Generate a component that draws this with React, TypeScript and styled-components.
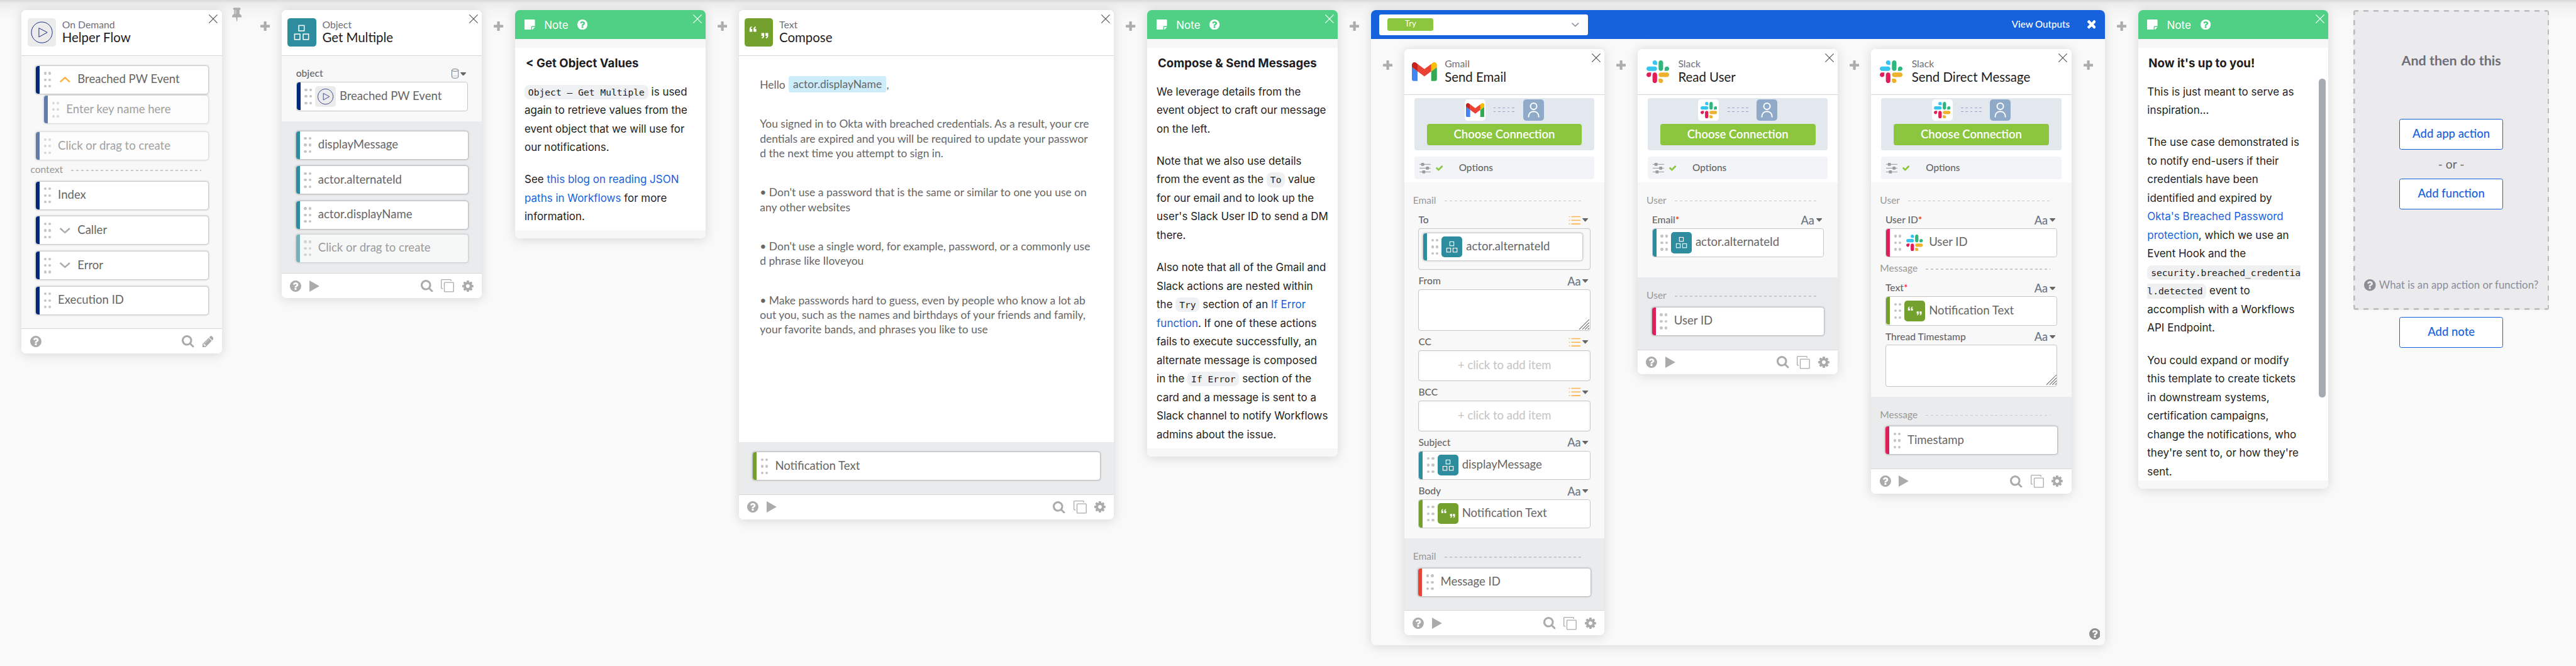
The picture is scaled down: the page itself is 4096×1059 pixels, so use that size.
import React, { ReactNode } from "react";
import styled, { createGlobalStyle, css } from "styled-components";

/* One rem is a 617.8th part of the window width, so the board scales with it. */
const GlobalStyle = createGlobalStyle`
  html { font-size: calc(100vw / 617.8); }
  body { margin: 0; background: #f9f9f9; overflow: hidden; }
  *, *::before, *::after { box-sizing: border-box; }
`;

const color = {
  text: "#666666",
  dark: "#1d1d21",
  muted: "#999999",
  icon: "#ababab",
  line: "#d5d6db",
  blue: "#1662dd",
  navy: "#00297a",
  teal: "#2d8c9e",
  green: "#74a12e",
  lime: "#8cc63f",
  note: "#4fd084",
  pink: "#e01e5a",
  red: "#ea4335",
};

const ui = `Lato, "Open Sans", sans-serif`;
const prose = `Inter, Roboto, sans-serif`;
const mono = `"DejaVu Sans Mono", "Liberation Mono", monospace`;

/* ---------- board ---------- */

const Board = styled.main`
  height: 100vh;
  padding: 2.4rem 0 0 5.2rem;
  display: flex;
  align-items: flex-start;
  overflow: hidden;
  font-family: ${ui};
  color: ${color.text};
  background: linear-gradient(
      rgba(0, 0, 0, 0.13) 0,
      rgba(0, 0, 0, 0.055) 0.8rem,
      rgba(0, 0, 0, 0.025) 2.2rem,
      transparent 5rem
    ),
    #f9f9f9;
`;

const PinSlot = styled.div`
  width: 6.4rem;
  padding-left: 2.5rem;
  margin-top: -0.6rem;
`;

const AddSlot = styled.div`
  flex: none;
  width: 8rem;
  padding-top: 2.7rem;
  display: flex;
  justify-content: center;
`;

const cardShadow = css`
  box-shadow: 0 0.2rem 2.6rem rgba(0, 0, 0, 0.14);
`;

const Card = styled.section<{ $w?: number }>`
  flex: none;
  position: relative;
  width: ${(p) => (p.$w ?? 480) / 10}rem;
  border-radius: 1.1rem;
  background: #fff;
  overflow: hidden;
`;

const CardShell = styled.div`
  flex: none;
  border-radius: 1.1rem;
  ${cardShadow}
`;

const CardHeader = styled.header`
  height: 11rem;
  padding: 2rem 0 0 1.4rem;
  display: flex;
  gap: 1.5rem;
  border-bottom: 0.2rem solid ${color.line};
  background: #fff;
`;

const AppName = styled.div`
  font-size: 2.38rem;
  line-height: 2.9rem;
  color: #6e6e78;
`;

const ActionName = styled.div`
  font-size: 3.08rem;
  line-height: 3.6rem;
  color: ${color.dark};
`;

const CloseButton = styled.span`
  position: absolute;
  top: 1rem;
  right: 0.95rem;
  display: flex;
`;

const Inputs = styled.div<{ $bottom?: number }>`
  padding-bottom: ${(p) => (p.$bottom ?? 16) / 10}rem;
  background: #f8f8f8;
`;

const Outputs = styled.div<{ $top?: number; $bottom?: number }>`
  padding-top: ${(p) => (p.$top ?? 0) / 10}rem;
  padding-bottom: ${(p) => (p.$bottom ?? 34) / 10}rem;
  background: #eaebed;
`;

const CardFooter = styled.footer`
  height: 6rem;
  padding: 0 2rem;
  display: flex;
  align-items: center;
  gap: 1.95rem;
  border-top: 0.2rem solid ${color.line};
  background: #fff;
`;

const Spacer = styled.span`
  flex: 1;
`;

/* ---------- svg sizing ---------- */

const Glyph = styled.svg<{ $w: number; $h?: number }>`
  flex: none;
  display: block;
  width: ${(p) => p.$w / 10}rem;
  height: ${(p) => (p.$h ?? p.$w) / 10}rem;
  fill: currentColor;
`;

const Stroke = styled(Glyph)<{ $sw?: number }>`
  fill: none;
  stroke: currentColor;
  stroke-width: ${(p) => p.$sw ?? 2};
  overflow: visible;
`;

const Tint = styled.span<{ $c: string }>`
  display: flex;
  color: ${(p) => p.$c};
`;

const HelpIcon = ({ size = 27 }: { size?: number }) => (
  <Glyph $w={size} viewBox="128 128 1536 1536">
    <path d="M1024 1376v-192q0-14-9-23t-23-9h-192q-14 0-23 9t-9 23v192q0 14 9 23t23 9h192q14 0 23-9t9-23zm256-672q0-88-55.5-163t-138.5-116-170-41q-243 0-371 213-15 24 8 42l132 100q7 6 19 6 16 0 25-12 53-68 86-92 34-24 86-24 48 0 85.5 26t37.5 59q0 38-20 61t-68 45q-63 28-115.5 86.5t-52.5 125.5v36q0 14 9 23t23 9h192q14 0 23-9t9-23q0-19 21.5-49.5t54.5-49.5q32-18 49-28.5t46-35 44.5-48 28-60.5 12.5-81zm384 192q0 209-103 385.5t-279.5 279.5-385.5 103-385.5-103-279.5-279.5-103-385.5 103-385.5 279.5-279.5 385.5-103 385.5 103 279.5 279.5 103 385.5z" />
  </Glyph>
);

const SearchIcon = () => (
  <Glyph $w={29.5} viewBox="64 128 1664 1664">
    <path d="M1216 832q0-185-131.5-316.5t-316.5-131.5-316.5 131.5-131.5 316.5 131.5 316.5 316.5 131.5 316.5-131.5 131.5-316.5zm512 832q0 52-38 90t-90 38q-54 0-90-38l-343-342q-179 124-399 124-143 0-273.5-55.5t-225-150-150-225-55.5-273.5 55.5-273.5 150-225 225-150 273.5-55.5 273.5 55.5 225 150 150 225 55.5 273.5q0 220-124 399l343 343q37 37 37 90z" />
  </Glyph>
);

const CogIcon = () => (
  <Glyph $w={27} viewBox="128 128 1536 1536">
    <path d="M1152 896q0-106-75-181t-181-75-181 75-75 181 75 181 181 75 181-75 75-181zm512-109v222q0 12-8 23t-20 13l-185 28q-19 54-39 91 35 50 107 138 10 12 10 25t-9 23q-27 37-99 108t-94 71q-12 0-26-9l-138-108q-44 23-91 38-16 136-29 186-7 28-36 28h-222q-14 0-24.5-8.5t-11.5-21.5l-28-184q-49-16-90-37l-141 107q-10 9-25 9-14 0-25-11-126-114-165-168-7-10-7-23 0-12 8-23 15-21 51-66.5t54-70.5q-27-50-41-99l-183-27q-13-2-21-12.5t-8-23.5v-222q0-12 8-23t19-13l186-28q14-46 39-92-40-57-107-138-10-12-10-24 0-10 9-23 26-36 98.5-107.5t94.5-71.5q13 0 26 10l138 107q44-23 91-38 16-136 29-186 7-28 36-28h222q14 0 24.5 8.5t11.5 21.5l28 184q49 16 90 37l142-107q9-9 24-9 13 0 25 10 129 119 165 170 7 8 7 22 0 12-8 23-15 21-51 66.5t-54 70.5q26 50 41 98l183 28q13 2 21 12.5t8 23.5z" />
  </Glyph>
);

const PencilIcon = () => (
  <Glyph $w={27} viewBox="128 149 1515 1515">
    <path d="M491 1536l91-91-235-235-91 91v107h128v128h107zm523-928q0-22-22-22-10 0-17 7l-542 542q-7 7-7 17 0 22 22 22 10 0 17-7l542-542q7-7 7-17zm-54-192l416 416-832 832h-416v-416zm683 96q0 53-37 90l-166 166-416-416 166-165q36-38 90-38 53 0 91 38l235 234q37 39 37 91z" />
  </Glyph>
);

const PinIcon = () => (
  <Glyph $w={23} $h={34} viewBox="320 128 1152 1664">
    <path d="M800 864v-448q0-14-9-23t-23-9-23 9-9 23v448q0 14 9 23t23 9 23-9 9-23zm672 352q0 26-19 45t-45 19h-429l-51 483q-2 12-10.5 20.5t-20.5 8.5h-1q-27 0-32-27l-76-485h-404q-26 0-45-19t-19-45q0-123 78.5-221.5t177.5-98.5v-512q-52 0-90-38t-38-90 38-90 90-38h640q52 0 90 38t38 90-38 90-90 38v512q99 0 177.5 98.5t78.5 221.5z" />
  </Glyph>
);

const TimesIcon = () => (
  <Glyph $w={20.5} viewBox="302 366 1188 1188">
    <path d="M1490 1322q0 40-28 68l-136 136q-28 28-68 28t-68-28l-294-294-294 294q-28 28-68 28t-68-28l-136-136q-28-28-28-68t28-68l294-294-294-294q-28-28-28-68t28-68l136-136q28-28 68-28t68 28l294 294 294-294q28-28 68-28t68 28l136 136q28 28 28 68t-28 68l-294 294 294 294q28 28 28 68z" />
  </Glyph>
);

const CheckIcon = () => (
  <Glyph $w={17} $h={13.5} viewBox="121 334 1550 1188">
    <path d="M1671 566q0 40-28 68l-724 724-136 136q-28 28-68 28t-68-28l-136-136-362-362q-28-28-28-68t28-68l136-136q28-28 68-28t68 28l294 295 656-657q28-28 68-28t68 28l136 136q28 28 28 68z" />
  </Glyph>
);

const PlusIcon = () => (
  <Glyph $w={23} viewBox="0 0 23 23">
    <rect x="0" y="8.3" width="23" height="6.4" rx="1.6" />
    <rect x="8.3" y="0" width="6.4" height="23" rx="1.6" />
  </Glyph>
);

const PlayIcon = () => (
  <Glyph $w={24} $h={27} viewBox="0 0 24 27">
    <path d="M0 0 24 13.5 0 27z" />
  </Glyph>
);

const CopyIcon = () => (
  <Stroke $w={31.5} $h={31} $sw={2} viewBox="0 0 31.5 31">
    <path d="M5 22.5H2.6A1.6 1.6 0 0 1 1 20.9V2.6A1.6 1.6 0 0 1 2.6 1h20.3a1.6 1.6 0 0 1 1.6 1.6V4.4" />
    <rect x="8.3" y="7.6" width="22.2" height="22.4" rx="1.4" />
  </Stroke>
);

const CrossIcon = () => (
  <Stroke $w={21} $sw={1.8} viewBox="0 0 21 21">
    <path d="M.5.5l20 20M20.5.5l-20 20" />
  </Stroke>
);

const Chevron = ({ up, w = 25, sw = 3.6 }: { up?: boolean; w?: number; sw?: number }) => (
  <Stroke $w={w} $h={w * 0.56} $sw={sw} viewBox="0 0 25 14">
    <path d={up ? "M1 12.5 12.5 2 24 12.5" : "M1 1.5 12.5 12 24 1.5"} strokeLinejoin="round" />
  </Stroke>
);

const Caret = () => (
  <Glyph $w={14} $h={8.6} viewBox="0 0 14 8.6">
    <path d="M.6 0h12.8c.5 0 .8.7.4 1.1L7.7 8.1a1 1 0 0 1-1.4 0L.2 1.1C-.2.700.1 0 .6 0z" />
  </Glyph>
);

const ListIcon = () => (
  <Stroke $w={29} $h={22} $sw={2.5} viewBox="0 0 29 22">
    <path
      d="M7.600 2.300h20.200M7.600 11h20.200M7.600 19.700h20.200M1.800 2.300h.4M1.800 11h.4M1.800 19.700h.4"
      strokeLinecap="round"
    />
  </Stroke>
);

const DatabaseIcon = () => (
  <Stroke $w={17} $h={24} $sw={1.5} viewBox="0 0 17 24">
    <ellipse cx="8.500" cy="3.800" rx="7.700" ry="2.900" />
    <path d="M.8 3.800v16.400c0 1.700 3.400 3 7.700 3s7.700-1.300 7.700-3V3.800" />
    <path d="M1.500 19.600c1-1.300 3.600-2 7-2s6 .7 7 2" strokeWidth="1" strokeDasharray="1.500 1.200" />
  </Stroke>
);

const SlidersIcon = () => (
  <Glyph $w={27} $h={26} viewBox="0 0 27 26">
    <rect x="0" y="2.700" width="27" height="1.600" />
    <rect x="0" y="11.900" width="27" height="1.600" />
    <rect x="0" y="20.900" width="27" height="1.600" />
    <rect x="4.200" y="0" width="7.200" height="7" rx="1" />
    <rect x="15.500" y="9.200" width="7.200" height="7" rx="1" />
    <rect x="6.700" y="18.200" width="7.200" height="7" rx="1" />
  </Glyph>
);

const ResizeIcon = () => (
  <Stroke $w={24} $sw={1.600} viewBox="0 0 24 24">
    <path d="M0 24 24 0M7.500 24 24 7.500M14 24 24 14M20.500 24 24 20.500" />
  </Stroke>
);

const StickyIcon = () => (
  <Glyph $w={25} viewBox="0 0 25 25">
    <path d="M1.500 0h22A1.500 1.500 0 0 1 25 1.500V16h-7.300a1.700 1.700 0 0 0-1.700 1.700V25H1.500A1.500 1.500 0 0 1 0 23.500v-22A1.500 1.500 0 0 1 1.500 0z" />
    <path d="M18 18h6.800a4 4 0 0 1-.9 1.700l-4.200 4.200a4 4 0 0 1-1.700.9z" />
  </Glyph>
);

/* ---------- app badges ---------- */

const BadgeBox = styled.span<{ $size: number; $bg: string }>`
  flex: none;
  width: ${(p) => p.$size / 10}rem;
  height: ${(p) => p.$size / 10}rem;
  border-radius: ${(p) => (p.$size > 60 ? 0.7 : 0.75)}rem;
  background: ${(p) => p.$bg};
  display: flex;
  align-items: center;
  justify-content: center;
`;

const GmailLogo = ({ w }: { w: number }) => (
  <Glyph $w={w} $h={w * 0.75} viewBox="52 42 88 66">
    <path fill="#4285f4" d="M58 108h14V74L52 59v43c0 3.320 2.690 6 6 6" />
    <path fill="#34a853" d="M120 108h14c3.320 0 6-2.690 6-6V59l-20 15" />
    <path fill="#fbbc04" d="M120 48v26l20-15v-8c0-7.420-8.470-11.650-14.400-7.200" />
    <path fill="#ea4335" d="M72 74V48l24 18 24-18v26L96 92" />
    <path fill="#c5221f" d="M52 51v8l20 15V48l-5.600-4.200c-5.940-4.450-14.400-.22-14.400 7.200" />
  </Glyph>
);

const SlackLogo = ({ w }: { w: number }) => (
  <Glyph $w={w} viewBox="0 0 2447.6 2452.5">
    <path fill="#36c5f0" d="M897.4 0c-135.3.1-244.8 109.9-244.7 245.2-.1 135.3 109.5 245.1 244.8 245.2h244.8V245.3c.1-135.3-109.5-245.1-244.9-245.3.1 0 .1 0 0 0m0 654H244.8C109.5 654.1-.1 763.9 0 899.2c-.2 135.3 109.4 245.1 244.7 245.3h652.7c135.3-.1 244.9-109.9 244.8-245.2.1-135.4-109.5-245.2-244.8-245.3z" />
    <path fill="#2eb67d" d="M2447.6 899.2c.1-135.3-109.5-245.1-244.8-245.2-135.3.1-244.9 109.9-244.8 245.2v245.3h244.8c135.3-.1 244.9-109.9 244.8-245.3zm-652.7 0V245.2C1795 110 1685.500.2 1550.200 0c-135.3.1-244.9 109.9-244.8 245.2v654c-.2 135.3 109.4 245.1 244.7 245.3 135.3-.1 244.9-109.9 244.8-245.3z" />
    <path fill="#ecb22e" d="M1550.1 2452.5c135.3-.1 244.9-109.9 244.8-245.2.1-135.3-109.5-245.1-244.8-245.2h-244.8v245.2c-.1 135.2 109.500 245 244.8 245.2zm0-654.1h652.7c135.3-.1 244.9-109.9 244.8-245.2.2-135.3-109.4-245.1-244.7-245.3h-652.7c-135.3.1-244.9 109.9-244.8 245.2-.1 135.4 109.4 245.2 244.7 245.3z" />
    <path fill="#e01e5a" d="M0 1553.2c-.1 135.3 109.5 245.1 244.8 245.2 135.3-.1 244.9-109.9 244.8-245.2V1308H244.8C109.5 1308.1-.1 1417.9 0 1553.2zm652.7 0v654c-.2 135.3 109.4 245.1 244.7 245.3 135.3-.1 244.9-109.9 244.8-245.2v-653.9c.2-135.3-109.4-245.1-244.7-245.3-135.4 0-244.9 109.8-244.8 245.1" />
  </Glyph>
);

type App = "demand" | "object" | "text" | "gmail" | "slack" | "slackTile" | "gmailTile";

const Badge = ({ app, size = 68 }: { app: App; size?: number }) => {
  if (app === "demand")
    return (
      <BadgeBox $size={size} $bg="#ececec">
        <Stroke $w={size} $sw={size > 60 ? 1.5 : 1.7} viewBox="0 0 68 68">
          <g stroke="#1a2a80">
            <circle cx="34" cy="34" r="25" />
            <path d="M27 23.500 47 34 27 45z" />
          </g>
        </Stroke>
      </BadgeBox>
    );
  if (app === "object")
    return (
      <BadgeBox $size={size} $bg={color.teal}>
        <Stroke $w={size} $sw={2.300} viewBox="0 0 68 68">
          <g stroke="#fff">
            <rect x="27.300" y="17.300" width="13" height="13" />
            <rect x="17.200" y="38" width="13" height="13" />
            <rect x="37.800" y="38" width="13" height="13" />
          </g>
        </Stroke>
      </BadgeBox>
    );
  if (app === "text")
    return (
      <BadgeBox $size={size} $bg={color.green}>
        <Glyph $w={size} viewBox="0 0 68 68">
          <g fill="#fff">
            <path d="M40.300 35.500h6.600v6.200c0 4-2.200 6.300-5.600 6.600v-2.300c1.600-.4 2.300-1.500 2.300-3.600h-3.300z" />
            <path d="M49.900 35.500h6.600v6.200c0 4-2.200 6.300-5.600 6.600v-2.300c1.600-.4 2.300-1.500 2.300-3.600h-3.300z" />
            <path d="M18.400 32.500h-6.600v-6.200c0-4 2.200-6.300 5.600-6.600v2.300c-1.600.4-2.300 1.500-2.300 3.600h3.300z" />
            <path d="M28 32.500h-6.600v-6.200c0-4 2.200-6.300 5.600-6.600v2.300c-1.600.4-2.300 1.500-2.300 3.600h3.300z" />
          </g>
        </Glyph>
      </BadgeBox>
    );
  if (app === "gmail" || app === "gmailTile")
    return (
      <BadgeBox $size={size} $bg={app === "gmail" ? "transparent" : "#fff"}>
        <GmailLogo w={app === "gmail" ? 60 : 44.5} />
      </BadgeBox>
    );
  return (
    <BadgeBox $size={size} $bg={app === "slackTile" ? "#fff" : "transparent"}>
      <SlackLogo w={size > 60 ? 54.5 : 40} />
    </BadgeBox>
  );
};

/* ---------- chips ---------- */

const ChipBox = styled.div<{ $ghost?: boolean; $inField?: boolean; $top?: number; $indent?: number }>`
  height: 6.65rem;
  margin: ${(p) => (p.$top ?? 0) / 10}rem ${(p) => (p.$inField ? 0 : 3.35)}rem 0
    ${(p) => (p.$inField ? 0 : 3.4 + (p.$indent ?? 0) / 10)}rem;
  display: flex;
  align-items: center;
  border-radius: 0.6rem;
  background: #fff;
  overflow: hidden;
  opacity: ${(p) => (p.$ghost ? 0.6 : 1)};
  box-shadow: ${(p) => (p.$inField ? "none" : "0 0 0.4rem 0.1rem rgba(0, 0, 0, 0.26)")};
  font-size: 2.8rem;
  line-height: 1;
  white-space: nowrap;
`;

const ChipBar = styled.span<{ $c: string }>`
  align-self: stretch;
  width: 0.9rem;
  margin-right: 1rem;
  background: ${(p) => p.$c};
`;

const Grip = styled.span`
  width: 1.75rem;
  height: 3.8rem;
  margin-right: 0.75rem;
  display: grid;
  grid-template: repeat(3, 0.65rem) / repeat(2, 0.65rem);
  align-content: space-between;
  justify-content: space-between;
  i {
    border-radius: 50%;
    background: #c4c4c4;
  }
`;

const ChevronSlot = styled.span<{ $c: string }>`
  width: 5.3rem;
  margin-right: -0.6rem;
  display: flex;
  justify-content: center;
  color: ${(p) => p.$c};
`;

const ChipText = styled.span`
  padding: 0 0 0.4rem 0.9rem;
`;

type ChipProps = {
  label: string;
  bar: string;
  app?: App;
  arrow?: "up" | "down";
  ghost?: boolean;
  inField?: boolean;
  top?: number;
  indent?: number;
};

const Chip = ({ label, bar, app, arrow, ghost, inField, top, indent }: ChipProps) => (
  <ChipBox $ghost={ghost} $inField={inField} $top={top} $indent={indent}>
    <ChipBar $c={bar} />
    <Grip>
      <i /><i /><i /><i /><i /><i />
    </Grip>
    {app && <Badge app={app} size={50} />}
    {arrow && (
      <ChevronSlot $c={arrow === "up" ? "#ffb03b" : "#ababab"}>
        <Chevron up={arrow === "up"} />
      </ChevronSlot>
    )}
    <ChipText>{label}</ChipText>
  </ChipBox>
);

/* ---------- form rows ---------- */

const GroupRow = styled.div<{ $top?: number }>`
  height: 5.2rem;
  margin-top: ${(p) => (p.$top ?? 20) / 10}rem;
  padding: 0 5rem 0.2rem 2.1rem;
  display: flex;
  align-items: center;
  gap: 2rem;
  font-size: 2.35rem;
  color: ${color.muted};
  span {
    padding-bottom: 0.5rem;
  }
  &::after {
    content: "";
    flex: 1;
    height: 0.2rem;
    background: repeating-linear-gradient(90deg, #c9c9c9 0 0.6rem, transparent 0.6rem 1.19rem);
  }
`;

const Group = ({ name, top }: { name: string; top?: number }) => (
  <GroupRow $top={top}>
    <span>{name}</span>
  </GroupRow>
);

const OutputsHead = styled.div`
  padding-top: 0.01rem;
`;

const FieldBlock = styled.div`
  margin: 0 3.35rem 0.8rem 3.4rem;
`;

const FieldLabel = styled.div`
  height: 3.84rem;
  padding-right: 0.5rem;
  display: flex;
  align-items: center;
  justify-content: space-between;
  font-size: 2.36rem;
  font-weight: 500;
  line-height: 1;
  span:first-child {
    padding-bottom: 0.1rem;
  }
  b {
    color: #f00;
    font-weight: 400;
  }
`;

const TypePicker = styled.div<{ $c: string }>`
  display: flex;
  align-items: center;
  gap: 0.4rem;
  color: ${color.text};
  font-size: 2.75rem;
  > :first-child {
    color: ${(p) => p.$c};
  }
`;

const FieldBox = styled.div<{ $h: number; $bg?: string; $add?: boolean }>`
  position: relative;
  height: ${(p) => p.$h / 10}rem;
  border: 0.2rem solid #c6c6c6;
  border-radius: 0.6rem;
  background: ${(p) => p.$bg ?? "#fff"};
  ${(p) =>
    p.$add &&
    css`
      display: flex;
      align-items: center;
      justify-content: center;
      padding-bottom: 0.4rem;
      font-size: 2.79rem;
      color: #c4c4c4;
      box-shadow: inset 0 0 0.8rem rgba(0, 0, 0, 0.06);
    `}
`;

const ListItem = styled.div`
  padding: 1rem 1.85rem 0 1rem;
  > div {
    margin: 0;
    height: 6.6rem;
    box-shadow: 0 0 0.4rem 0.1rem rgba(0, 0, 0, 0.26);
  }
`;

const ResizeCorner = styled.span`
  position: absolute;
  right: 0.15rem;
  bottom: 0.2rem;
  display: flex;
  color: #666;
`;

type Kind = "text" | "list" | "object";

const Field = ({ label, kind, required, children }: { label: string; kind: Kind; required?: boolean; children: ReactNode }) => (
  <FieldBlock>
    <FieldLabel>
      <span>
        {label}
        {required && <b>*</b>}
      </span>
      <TypePicker $c={kind === "list" ? "#ffb347" : "#6b7785"}>
        {kind === "list" && <Tint $c="#ffb347"><ListIcon /></Tint>}
        {kind === "object" && <Tint $c="#6b7785"><DatabaseIcon /></Tint>}
        {kind === "text" && <span>Aa</span>}
        <Caret />
      </TypePicker>
    </FieldLabel>
    {children}
  </FieldBlock>
);

const ChipField = (p: { label: string; kind: Kind; required?: boolean; chip: string; bar: string; app: App }) => (
  <Field label={p.label} kind={p.kind} required={p.required}>
    <FieldBox $h={70}>
      <Chip inField label={p.chip} bar={p.bar} app={p.app} />
    </FieldBox>
  </Field>
);

const AreaField = ({ label }: { label: string }) => (
  <Field label={label} kind="text">
    <FieldBox $h={100}>
      <ResizeCorner><ResizeIcon /></ResizeCorner>
    </FieldBox>
  </Field>
);

const AddItemField = ({ label }: { label: string }) => (
  <Field label={label} kind="list">
    <FieldBox $h={74} $add>+ click to add item</FieldBox>
  </Field>
);

/* ---------- connection ---------- */

const ConnectArea = styled.div`
  padding: 0.8rem 2.4rem 0.7rem;
  background: #fff;
`;

const ConnectPanel = styled.div`
  height: 12.4rem;
  padding-top: 0.3rem;
  display: flex;
  flex-direction: column;
  align-items: center;
  gap: 0.8rem;
  border-radius: 0.6rem;
  background: #e3e8ef;
`;

const ConnectLink = styled.div`
  display: flex;
  align-items: center;
  gap: 2rem;
`;

const LinkDashes = styled.span`
  width: 5rem;
  height: 1.1rem;
  border: solid transparent;
  border-width: 0;
  background:
    repeating-linear-gradient(90deg, #92a6cf 0 0.55rem, transparent 0.55rem 1.11rem) top / 100% 0.2rem no-repeat,
    repeating-linear-gradient(90deg, #92a6cf 0 0.55rem, transparent 0.55rem 1.11rem) bottom / 100% 0.2rem no-repeat;
`;

const ConnectButton = styled.button`
  width: 37.2rem;
  height: 5.2rem;
  padding: 0 0 0.3rem;
  border: 0;
  border-radius: 0.6rem;
  background: ${color.lime};
  color: #fff;
  font: 600 2.79rem/1 ${ui};
`;

const OptionsBar = styled.div`
  height: 5.4rem;
  margin-top: 1.6rem;
  padding-left: 1.2rem;
  display: flex;
  align-items: center;
  border-radius: 0.6rem;
  background: #f2f4f8;
  font-size: 2.32rem;
  font-weight: 500;
  > :nth-child(2) {
    margin: 0 3.9rem 0 1.2rem;
  }
  > :nth-child(3) {
    padding-bottom: 0.4rem;
  }
`;

const Connection = ({ app }: { app: App }) => (
  <ConnectArea>
    <ConnectPanel>
      <ConnectLink>
        <Badge app={app} size={50} />
        <LinkDashes />
        <BadgeBox $size={50} $bg="#8fa9c9">
          <Stroke $w={50} $sw={3} viewBox="0 0 50 50">
            <g stroke="#fff">
              <circle cx="25" cy="16.500" r="7.600" />
              <path d="M12.600 43c0-8.500 5-14 12.400-14s12.400 5.500 12.400 14" />
            </g>
          </Stroke>
        </BadgeBox>
      </ConnectLink>
      <ConnectButton>Choose Connection</ConnectButton>
    </ConnectPanel>
    <OptionsBar>
      <Tint $c="#9b9b9b"><SlidersIcon /></Tint>
      <Tint $c={color.lime}><CheckIcon /></Tint>
      <span>Options</span>
    </OptionsBar>
  </ConnectArea>
);

/* ---------- action card ---------- */

type ActionProps = { app: App; appName: string; name: string; width?: number; event?: boolean; children: ReactNode };

const ActionCard = ({ app, appName, name, width, event, children }: ActionProps) => (
  <CardShell>
    <Card $w={width}>
      <CardHeader>
        <Badge app={app} />
        <div>
          <AppName>{appName}</AppName>
          <ActionName>{name}</ActionName>
        </div>
      </CardHeader>
      <CloseButton>
        <Tint $c="#555"><CrossIcon /></Tint>
      </CloseButton>
      {children}
      <CardFooter>
        <Tint $c={color.icon}><HelpIcon /></Tint>
        {!event && <Tint $c={color.icon}><PlayIcon /></Tint>}
        <Spacer />
        <Tint $c={color.icon}><SearchIcon /></Tint>
        {!event && <Tint $c={color.icon}><CopyIcon /></Tint>}
        <Tint $c={color.icon}>{event ? <PencilIcon /> : <CogIcon />}</Tint>
      </CardFooter>
    </Card>
  </CardShell>
);

const Add = () => (
  <AddSlot>
    <Tint $c="#adadad"><PlusIcon /></Tint>
  </AddSlot>
);

/* ---------- compose ---------- */

const Message = styled.div`
  height: 92.7rem;
  padding: 5.14rem 0 0 5.05rem;
  background: #fff;
  font-size: 2.637rem;
  line-height: 3.52rem;
  white-space: nowrap;
  p {
    margin: 0 0 5.88rem;
  }
`;

const Token = styled.span`
  margin-left: 0.1rem;
  padding: 0.37rem 1.1rem;
  border-radius: 0.5rem;
  background: #cdedfb;
`;

/* ---------- notes ---------- */

const NoteHeader = styled.header`
  height: 7rem;
  padding-left: 2.2rem;
  display: flex;
  align-items: center;
  gap: 2.2rem;
  background: ${color.note};
  color: #fff;
  font: 400 2.58rem/1 ${prose};
`;

const NoteFrame = styled.div`
  padding: 2rem 0;
  background: #f7f7f7;
`;

const NoteBody = styled.div<{ $h: number }>`
  height: ${(p) => p.$h / 10}rem;
  padding: 2.1rem 0 0 2.2rem;
  overflow: hidden;
  background: #fff;
  color: ${color.dark};
  font: 400 2.56rem/4.45rem ${prose};
  white-space: nowrap;
  h3 {
    margin: 0 0 3rem 0.3rem;
    font-size: 2.81rem;
    line-height: 3.4rem;
    font-weight: 700;
  }
  p {
    margin: 0 0 3.25rem;
  }
  a {
    color: ${color.blue};
  }
  code {
    padding: 0.5rem 0.88rem;
    border-radius: 1.2rem;
    background: #eff0f2;
    font: 2.21rem/1 ${mono};
  }
`;

const ScrollThumb = styled.span`
  position: absolute;
  top: 16.4rem;
  right: 0.6rem;
  width: 1.6rem;
  height: 76.5rem;
  border-radius: 0.8rem;
  background: #a7aab3;
`;

const Note = ({ title, height, scroll, children }: { title: string; height: number; scroll?: boolean; children: ReactNode }) => (
  <CardShell>
    <Card $w={456}>
      <NoteHeader>
        <StickyIcon />
        <span>Note</span>
        <HelpIcon size={24.5} />
      </NoteHeader>
      <CloseButton>
        <Tint $c="#fff"><CrossIcon /></Tint>
      </CloseButton>
      <NoteFrame>
        <NoteBody $h={height}>
          <h3>{title}</h3>
          {children}
        </NoteBody>
      </NoteFrame>
      {scroll && <ScrollThumb />}
    </Card>
  </CardShell>
);

/* ---------- if error container ---------- */

const TryBlock = styled.section`
  flex: none;
  position: relative;
  width: 176rem;
  border-radius: 1.2rem;
  background: #f9f9f9;
  overflow: hidden;
`;

const TryHeader = styled.header`
  height: 7rem;
  padding: 0 2.15rem 0 2rem;
  display: flex;
  align-items: center;
  background: ${color.blue};
  color: #fff;
  font-size: 2.28rem;
  font-weight: 500;
`;

const BranchSelect = styled.div`
  width: 50rem;
  height: 5rem;
  padding: 0 2.1rem 0 2rem;
  display: flex;
  align-items: center;
  justify-content: space-between;
  border-radius: 0.5rem;
  background: #fff;
  color: #8a949e;
`;

const BranchTag = styled.span`
  width: 11rem;
  height: 2.95rem;
  border-radius: 0.5rem;
  background: ${color.lime};
  color: #fff;
  font-size: 2rem;
  font-weight: 400;
  line-height: 2.7rem;
  text-align: center;
`;

const ViewOutputs = styled.span`
  margin: 0 4.2rem 0.3rem 0;
`;

const TryFlow = styled.div`
  padding: 2.4rem 0;
  display: flex;
  align-items: flex-start;
`;

const BlockHelp = styled.span`
  position: absolute;
  right: 1.1rem;
  bottom: 1.4rem;
  display: flex;
  color: #8f8f8f;
`;

/* ---------- next step ---------- */

const NextColumn = styled.div`
  flex: none;
  width: 47rem;
  margin-left: 6rem;
  display: flex;
  flex-direction: column;
  align-items: center;
`;

const dashX = "repeating-linear-gradient(90deg, #bcbcbc 0 1.2rem, transparent 1.2rem 2.413rem)";
const dashY = "repeating-linear-gradient(180deg, #bcbcbc 0 1.2rem, transparent 1.2rem 2.359rem)";

const NextBox = styled.div`
  align-self: stretch;
  height: 71.9rem;
  margin-bottom: 1.7rem;
  display: flex;
  flex-direction: column;
  align-items: center;
  border-radius: 0.6rem;
  background:
    ${dashX} 0 0 / 100% 0.4rem no-repeat,
    ${dashX} 0 100% / 100% 0.4rem no-repeat,
    ${dashY} 0 0 / 0.4rem 100% no-repeat,
    ${dashY} 100% 0 / 0.4rem 100% no-repeat,
    #ebebed;
`;

const NextTitle = styled.div`
  margin: 10.1rem 0 11.8rem;
  font-size: 3.245rem;
  line-height: 4.2rem;
  font-weight: 700;
  color: #6e6e78;
`;

const OutlineButton = styled.button`
  width: 25rem;
  height: 7.4rem;
  padding: 0 0 0.3rem;
  border: 0.2rem solid ${color.blue};
  border-radius: 0.5rem;
  background: #fff;
  color: ${color.blue};
  font: 500 2.79rem/1 ${ui};
`;

const OrText = styled.div`
  height: 6.9rem;
  font-size: 2.92rem;
  line-height: 7rem;
  color: ${color.text};
`;

const NextHelp = styled.div`
  margin-top: 16.5rem;
  display: flex;
  align-items: center;
  gap: 0.8rem;
  font-size: 2.54rem;
  line-height: 3.4rem;
  color: #8c8c96;
`;

export default function App() {
  return (
    <>
      <GlobalStyle />
      <Board>
        <ActionCard event app="demand" appName="On Demand" name="Helper Flow">
          <Inputs $bottom={34}>
            <OutputsHead />
            <Chip label="Breached PW Event" bar={color.navy} arrow="up" top={24} />
            <Chip label="Enter key name here" bar={color.navy} ghost top={5} indent={20} />
            <Chip label="Click or drag to create" bar={color.navy} ghost top={21} />
            <Group name="context" top={0} />
            <Chip label="Index" bar={color.navy} />
            <Chip label="Caller" bar={color.navy} arrow="down" top={17.5} />
            <Chip label="Error" bar={color.navy} arrow="down" top={17.5} />
            <Chip label="Execution ID" bar={color.navy} top={17.5} />
          </Inputs>
        </ActionCard>
        <PinSlot>
          <Tint $c="#adadad"><PinIcon /></Tint>
        </PinSlot>
        <Add />

        <ActionCard app="object" appName="Object" name="Get Multiple">
          <Inputs>
            <OutputsHead />
            <FieldGap />
            <ChipField label="object" kind="object" chip="Breached PW Event" bar={color.navy} app="demand" />
          </Inputs>
          <Outputs $bottom={26}>
            <OutputsHead />
            <Chip label="displayMessage" bar={color.teal} top={24} />
            <Chip label="actor.alternateId" bar={color.teal} top={17.5} />
            <Chip label="actor.displayName" bar={color.teal} top={17.5} />
            <Chip label="Click or drag to create" bar={color.teal} ghost top={13.5} />
          </Outputs>
        </ActionCard>
        <Add />

        <Note title="&lt; Get Object Values" height={438}>
          <p>
            <code>Object – Get Multiple</code> is used<br />
            again to retrieve values from the<br />
            event object that we will use for<br />
            our notifications.
          </p>
          <p>
            See <a>this blog on reading JSON<br />
            paths in Workflows</a> for more<br />
            information.
          </p>
        </Note>
        <Add />

        <ActionCard app="text" appName="Text" name="Compose" width={900}>
          <Message>
            <p>Hello <Token>actor.displayName</Token>,</p>
            <p>
              You signed in to Okta with breached credentials. As a result, your cre<br />
              dentials are expired and you will be required to update your passwor<br />
              d the next time you attempt to sign in.
            </p>
            <p>
              • Don't use a password that is the same or similar to one you use on<br />
              any other websites
            </p>
            <p>
              • Don't use a single word, for example, password, or a commonly use<br />
              d phrase like Iloveyou
            </p>
            <p>
              • Make passwords hard to guess, even by people who know a lot ab<br />
              out you, such as the names and birthdays of your friends and family,<br />
              your favorite bands, and phrases you like to use
            </p>
          </Message>
          <Outputs $top={24}>
            <Chip label="Notification Text" bar={color.green} />
          </Outputs>
        </ActionCard>
        <Add />

        <Note title="Compose &amp; Send Messages" height={961}>
          <p>
            We leverage details from the<br />
            event object to craft our message<br />
            on the left.
          </p>
          <p>
            Note that we also use details<br />
            from the event as the <code>To</code> value<br />
            for our email and to look up the<br />
            user's Slack User ID to send a DM<br />
            there.
          </p>
          <p>
            Also note that all of the Gmail and<br />
            Slack actions are nested within<br />
            the <code>Try</code> section of an <a>If Error<br />
            function</a>. If one of these actions<br />
            fails to execute successfully, an<br />
            alternate message is composed<br />
            in the <code>If Error</code> section of the<br />
            card and a message is sent to a<br />
            Slack channel to notify Workflows<br />
            admins about the issue.
          </p>
        </Note>
        <Add />

        <CardShell>
          <TryBlock>
            <TryHeader>
              <BranchSelect>
                <BranchTag>Try</BranchTag>
                <Chevron w={17.5} sw={3.4} />
              </BranchSelect>
              <Spacer />
              <ViewOutputs>View Outputs</ViewOutputs>
              <TimesIcon />
            </TryHeader>
            <TryFlow>
              <Add />
              <ActionCard app="gmail" appName="Gmail" name="Send Email">
                <Connection app="gmailTile" />
                <Inputs>
                  <OutputsHead />
                  <Group name="Email" />
                  <Field label="To" kind="list">
                    <FieldBox $h={100} $bg="#f8f8f8">
                      <ListItem>
                        <Chip inField label="actor.alternateId" bar={color.teal} app="object" />
                      </ListItem>
                    </FieldBox>
                  </Field>
                  <AreaField label="From" />
                  <AddItemField label="CC" />
                  <AddItemField label="BCC" />
                  <ChipField label="Subject" kind="text" chip="displayMessage" bar={color.teal} app="object" />
                  <ChipField label="Body" kind="text" chip="Notification Text" bar={color.green} app="text" />
                </Inputs>
                <Outputs>
                  <OutputsHead />
                  <Group name="Email" />
                  <Chip label="Message ID" bar={color.red} />
                </Outputs>
              </ActionCard>
              <Add />
              <ActionCard app="slack" appName="Slack" name="Read User">
                <Connection app="slackTile" />
                <Inputs $bottom={40}>
                  <OutputsHead />
                  <Group name="User" />
                  <ChipField label="Email" required kind="text" chip="actor.alternateId" bar={color.teal} app="object" />
                </Inputs>
                <Outputs>
                  <OutputsHead />
                  <Group name="User" />
                  <Chip label="User ID" bar={color.pink} />
                </Outputs>
              </ActionCard>
              <Add />
              <ActionCard app="slack" appName="Slack" name="Send Direct Message">
                <Connection app="slackTile" />
                <Inputs>
                  <OutputsHead />
                  <Group name="User" />
                  <ChipField label="User ID" required kind="text" chip="User ID" bar={color.pink} app="slack" />
                  <Group name="Message" top={-5} />
                  <ChipField label="Text" required kind="text" chip="Notification Text" bar={color.green} app="text" />
                  <AreaField label="Thread Timestamp" />
                </Inputs>
                <Outputs>
                  <OutputsHead />
                  <Group name="Message" />
                  <Chip label="Timestamp" bar={color.pink} />
                </Outputs>
              </ActionCard>
              <Add />
            </TryFlow>
            <BlockHelp><HelpIcon /></BlockHelp>
          </TryBlock>
        </CardShell>
        <Add />

        <Note title="Now it's up to you!" height={1038} scroll>
          <p>
            This is just meant to serve as<br />
            inspiration...
          </p>
          <p>
            The use case demonstrated is<br />
            to notify end-users if their<br />
            credentials have been<br />
            identified and expired by<br />
            <a>Okta's Breached Password<br />
            protection</a>, which we use an<br />
            Event Hook and the<br />
            <code>security.breached_credentia<br />
            l.detected</code> event to<br />
            accomplish with a Workflows<br />
            API Endpoint.
          </p>
          <p>
            You could expand or modify<br />
            this template to create tickets<br />
            in downstream systems,<br />
            certification campaigns,<br />
            change the notifications, who<br />
            they're sent to, or how they're<br />
            sent.
          </p>
        </Note>

        <NextColumn>
          <NextBox>
            <NextTitle>And then do this</NextTitle>
            <OutlineButton>Add app action</OutlineButton>
            <OrText>- or -</OrText>
            <OutlineButton>Add function</OutlineButton>
            <NextHelp>
              <HelpIcon size={28} />
              <span>What is an app action or function?</span>
            </NextHelp>
          </NextBox>
          <OutlineButton>Add note</OutlineButton>
        </NextColumn>
      </Board>
    </>
  );
}

const FieldGap = styled.div`
  height: 2.4rem;
`;
